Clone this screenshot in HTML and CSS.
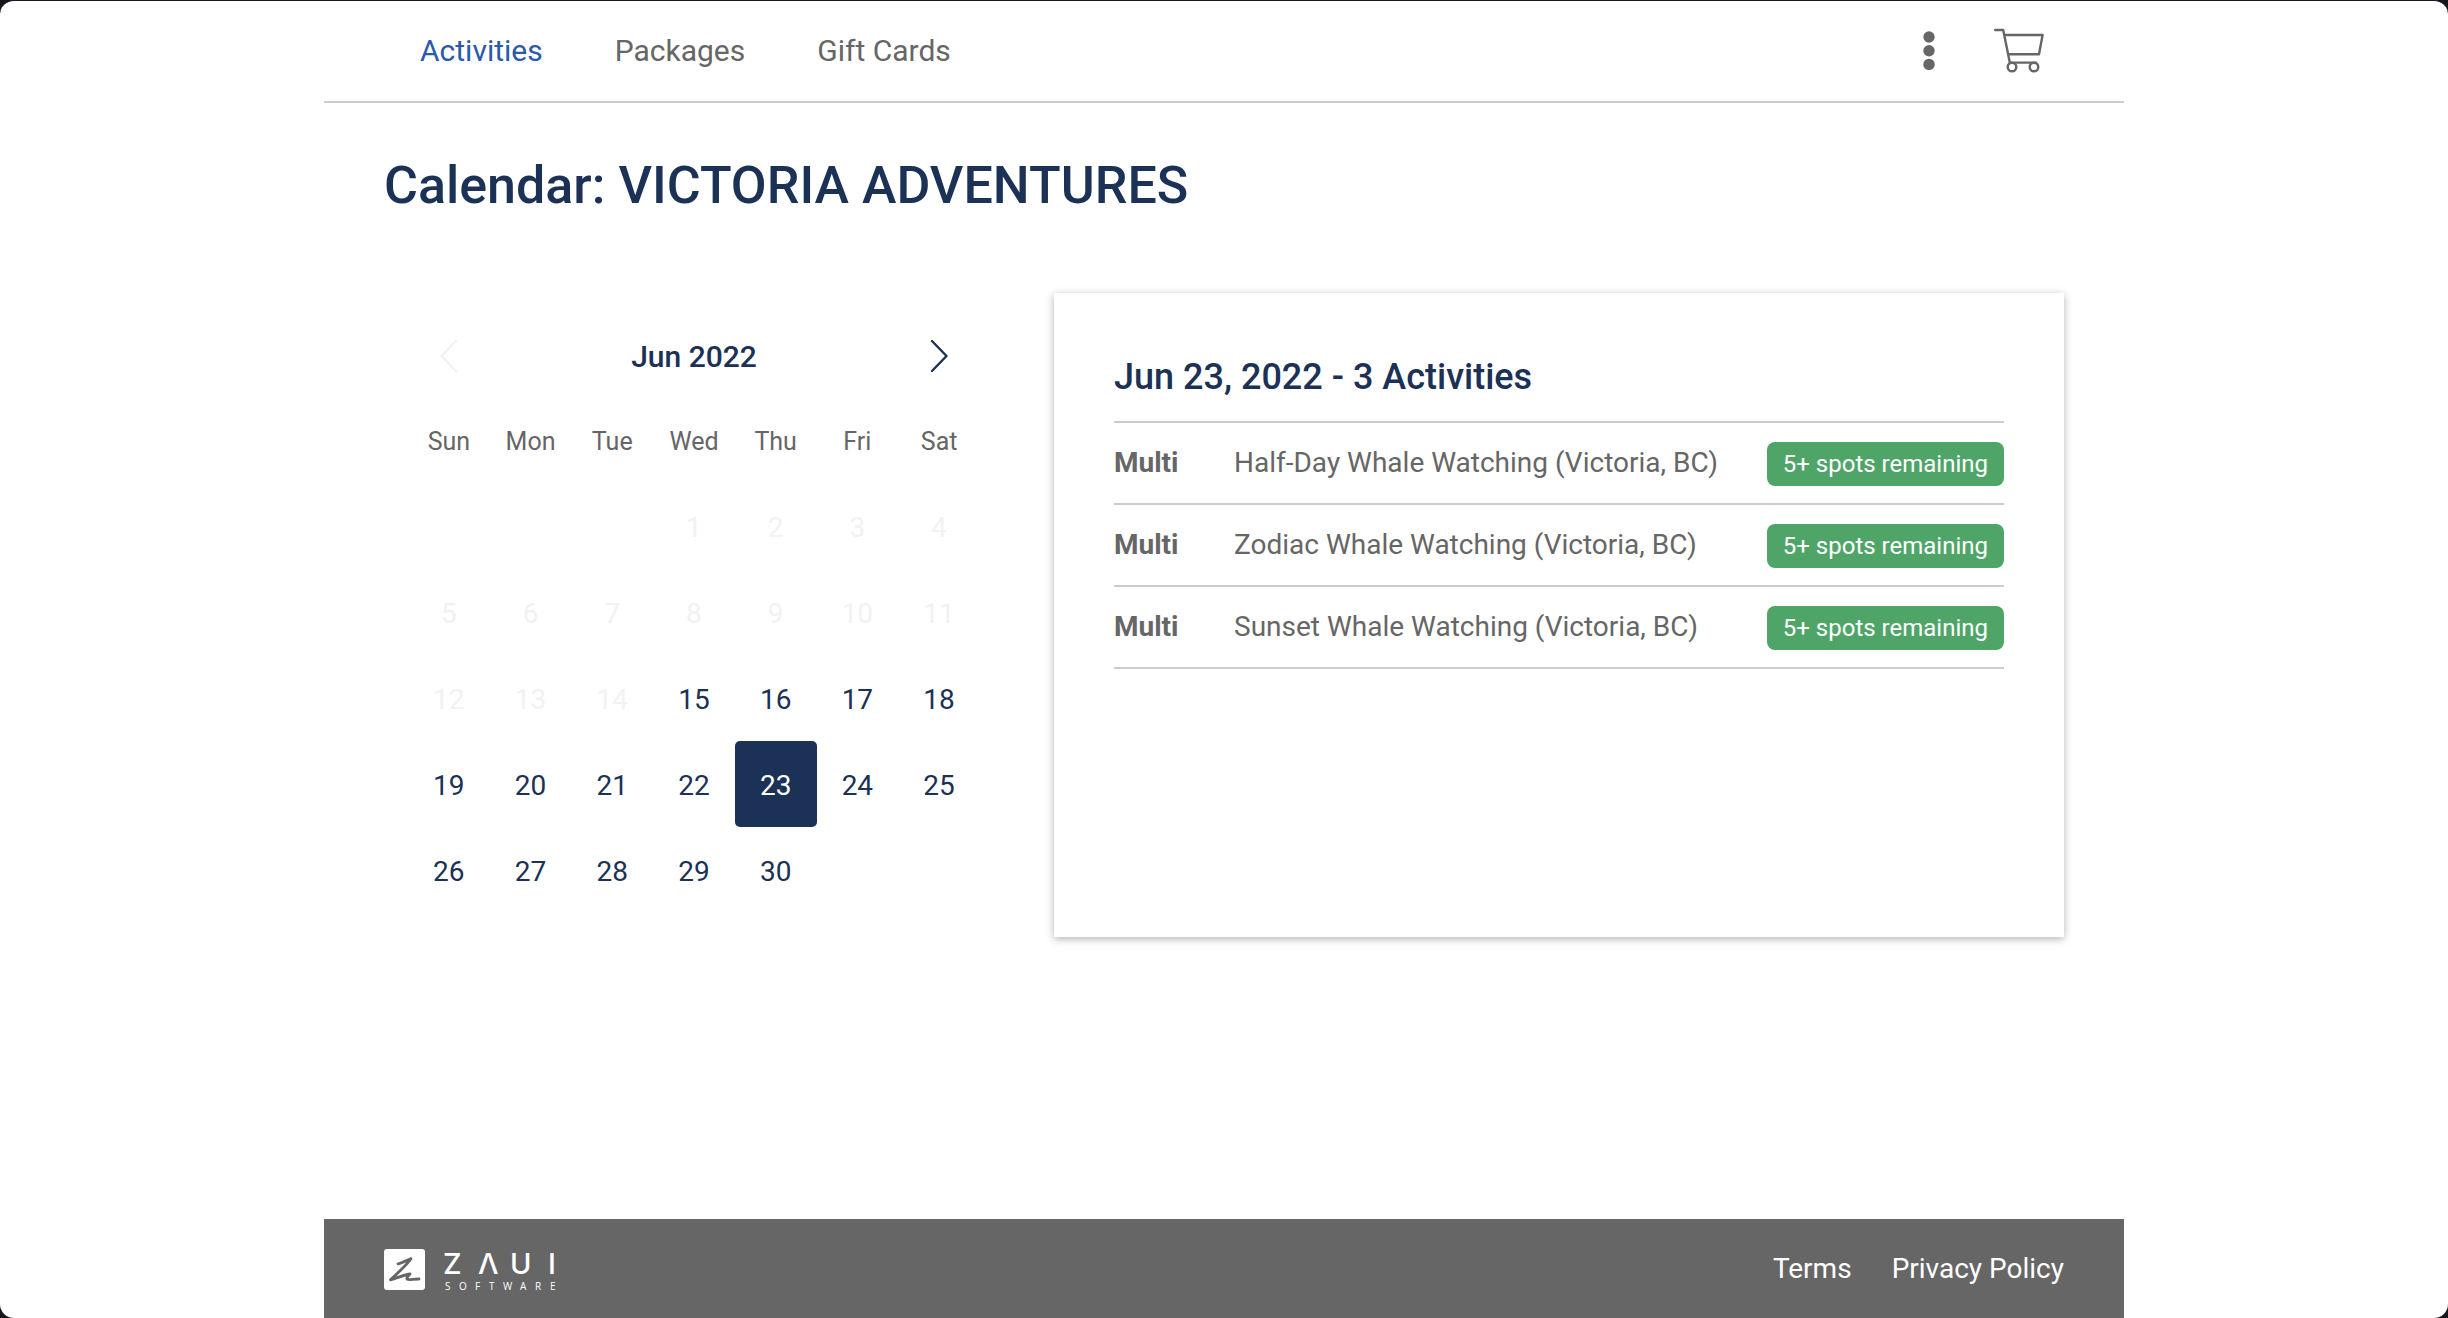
FILE: index.html
```html
<!DOCTYPE html>
<html lang="en">
<head>
<meta charset="utf-8">
<meta name="viewport" content="width=device-width, initial-scale=1">
<title>Calendar: VICTORIA ADVENTURES</title>
<link rel="stylesheet" href="styles.css">
</head>
<body>
<div class="window">
  <div class="page">
    <header class="header">
      <nav class="nav">
        <a href="#" class="active">Activities</a>
        <a href="#">Packages</a>
        <a href="#">Gift Cards</a>
      </nav>
      <div class="tools">
        <button type="button" class="icon-btn" aria-label="More">
          <svg width="12" height="42" viewBox="0 0 12 42"><circle cx="6" cy="8" r="5.7"/><circle cx="6" cy="21.7" r="5.7"/><circle cx="6" cy="35.4" r="5.7"/></svg>
        </button>
        <button type="button" class="icon-btn" aria-label="Cart">
          <svg class="cart" width="50" height="46" viewBox="0 0 50 46">
            <path d="M1.2 3H9.2L15.8 35.6H42"/>
            <path d="M11.3 8H48.6L45 27.3H14.8"/>
            <circle cx="18" cy="40" r="4.3"/>
            <circle cx="40" cy="40" r="4.3"/>
          </svg>
        </button>
      </div>
    </header>

    <main class="main">
      <h1>Calendar: VICTORIA ADVENTURES</h1>
      <div class="columns">
        <section class="calendar">
          <div class="month">
            <button type="button" class="icon-btn" aria-label="Previous month" disabled>
              <svg class="chevron" width="20" height="32" viewBox="0 0 20 32"><path d="M17 1L2.5 16L17 31"/></svg>
            </button>
            <h2>Jun 2022</h2>
            <button type="button" class="icon-btn" aria-label="Next month">
              <svg class="chevron" width="20" height="32" viewBox="0 0 20 32"><path d="M3 1L17.5 16L3 31"/></svg>
            </button>
          </div>
          <table class="days">
            <thead>
              <tr><th>Sun</th><th>Mon</th><th>Tue</th><th>Wed</th><th>Thu</th><th>Fri</th><th>Sat</th></tr>
            </thead>
            <tbody>
              <tr>
                <td></td><td></td><td></td>
                <td><button type="button" disabled>1</button></td>
                <td><button type="button" disabled>2</button></td>
                <td><button type="button" disabled>3</button></td>
                <td><button type="button" disabled>4</button></td>
              </tr>
              <tr>
                <td><button type="button" disabled>5</button></td>
                <td><button type="button" disabled>6</button></td>
                <td><button type="button" disabled>7</button></td>
                <td><button type="button" disabled>8</button></td>
                <td><button type="button" disabled>9</button></td>
                <td><button type="button" disabled>10</button></td>
                <td><button type="button" disabled>11</button></td>
              </tr>
              <tr>
                <td><button type="button" disabled>12</button></td>
                <td><button type="button" disabled>13</button></td>
                <td><button type="button" disabled>14</button></td>
                <td><button type="button">15</button></td>
                <td><button type="button">16</button></td>
                <td><button type="button">17</button></td>
                <td><button type="button">18</button></td>
              </tr>
              <tr>
                <td><button type="button">19</button></td>
                <td><button type="button">20</button></td>
                <td><button type="button">21</button></td>
                <td><button type="button">22</button></td>
                <td><button type="button" class="selected">23</button></td>
                <td><button type="button">24</button></td>
                <td><button type="button">25</button></td>
              </tr>
              <tr>
                <td><button type="button">26</button></td>
                <td><button type="button">27</button></td>
                <td><button type="button">28</button></td>
                <td><button type="button">29</button></td>
                <td><button type="button">30</button></td>
                <td></td><td></td>
              </tr>
            </tbody>
          </table>
        </section>

        <section class="card">
          <h2>Jun 23, 2022 - 3 Activities</h2>
          <ul class="activities">
            <li>
              <strong>Multi</strong>
              <span class="name">Half-Day Whale Watching (Victoria, BC)</span>
              <span class="badge">5+ spots remaining</span>
            </li>
            <li>
              <strong>Multi</strong>
              <span class="name">Zodiac Whale Watching (Victoria, BC)</span>
              <span class="badge">5+ spots remaining</span>
            </li>
            <li>
              <strong>Multi</strong>
              <span class="name">Sunset Whale Watching (Victoria, BC)</span>
              <span class="badge">5+ spots remaining</span>
            </li>
          </ul>
        </section>
      </div>
    </main>

    <footer class="footer">
      <a href="#" class="logo" aria-label="Zaui Software">
        <svg width="180" height="47" viewBox="0 -4 180 47">
          <rect width="41" height="41" rx="3" fill="#fff"/>
          <path class="mark" d="M14 14.8C18 14.2 23 11.5 27 9.6C24 15 14 23.5 6.5 30.8C13 28.8 20 26 26 25C24.5 27 22 28.8 23 30C25 31.4 29 29.8 35 30"/>
          <text class="brand" y="25" x="59 94 126 164">ZΛUI</text>
          <text class="sub" y="41" x="61 75 91 105 119 136 151 166">SOFTWARE</text>
        </svg>
      </a>
      <nav class="links">
        <a href="#">Terms</a>
        <a href="#">Privacy Policy</a>
      </nav>
    </footer>
  </div>
</div>
</body>
</html>
```
FILE: styles.css
```css
*{ box-sizing:border-box; }

html{ background:#16161d; }

body{
	margin:0;
	font-family:Roboto, "Liberation Sans", sans-serif;
	font-size:28px;
	color:#666;
}

h1, h2, ul{ margin:0; padding:0; }
h1, h2{ color:#1b3155; font-weight:500; }
a{ color:inherit; text-decoration:none; }

button{
	font:inherit;
	color:#1b3155;
	background:none;
	border:0;
	padding:0;
	cursor:pointer;
}

button:disabled{ color:#f2f2f2; cursor:default; }

svg{ display:block; }

/* browser window edge */
.window{
	min-height:100vh;
	border-top:1px solid #16161d;
	border-radius:14px;
	background:#fff;
	display:flex;
}

.page{
	width:100%;
	max-width:1800px;
	margin:0 auto;
	display:flex;
	flex-direction:column;
}

/* header */
.header{
	display:flex;
	justify-content:space-between;
	align-items:center;
	height:102px;
	padding:0 80px 2px 96px;
	border-bottom:2px solid #ccc;
}

.nav{
	display:flex;
	gap:72px;
	font-size:30px;
}

.nav .active{ color:#2b59ab; }

.tools{
	display:flex;
	align-items:center;
	gap:59px;
}

.tools .icon-btn{ color:#666; }
.icon-btn svg{ fill:currentColor; }

.icon-btn .cart, .icon-btn .chevron{
	fill:none;
	stroke:currentColor;
	stroke-width:2.4;
	stroke-linecap:round;
	stroke-linejoin:round;
}

/* content */
.main{ padding:51px 60px; }

h1{
	font-size:52px;
	line-height:64px;
	margin-bottom:75px;
}

.columns{
	display:grid;
	grid-template-columns:62fr 101fr;
	gap:50px;
}

.calendar{ padding:20px 24px 0; }

.month{
	display:flex;
	justify-content:space-between;
	align-items:center;
	height:84px;
	padding:2px 31px 0;
}

.month h2{ font-size:30px; }

.days{
	width:100%;
	table-layout:fixed;
	border-collapse:collapse;
}

.days th, .days td{
	height:86px;
	padding:0;
	text-align:center;
}

.days th{
	padding-top:2px;
	font-size:25px;
	font-weight:400;
}

.days button{
	display:block;
	width:100%;
	height:86px;
	padding-top:2px;
	border-radius:5px;
}

.days .selected{
	background:#1b3155;
	color:#fff;
}

.card{
	min-height:644px;
	padding:60px;
	box-shadow:0 2px 8px rgba(0,0,0,.3);
}

.card h2{
	font-size:36px;
	line-height:48px;
	padding-bottom:20px;
	border-bottom:2px solid #ccc;
}

.activities{ list-style:none; }

.activities li{
	display:flex;
	align-items:center;
	height:82px;
	border-bottom:2px solid #ccc;
}

.activities strong{ width:120px; }
.activities .name{ flex:1; }
.activities strong, .activities .name{ padding-bottom:2px; }

.badge{
	margin-top:2px;
	padding:0 16px;
	line-height:44px;
	font-size:24px;
	color:#fff;
	background:#4fa568;
	border-radius:8px;
}

/* footer */
.footer{
	display:flex;
	justify-content:space-between;
	align-items:center;
	height:99px;
	margin-top:auto;
	padding:0 60px;
	background:#666;
	color:#fff;
}

.mark{
	fill:none;
	stroke:#666;
	stroke-width:2.8;
	stroke-linecap:round;
	stroke-linejoin:round;
}

.brand{
	font:500 29px Inter, sans-serif;
	fill:#fff;
}

.sub{
	font:10px "Open Sans", sans-serif;
	fill:#fff;
}

.links{
	display:flex;
	gap:40px;
}
```
